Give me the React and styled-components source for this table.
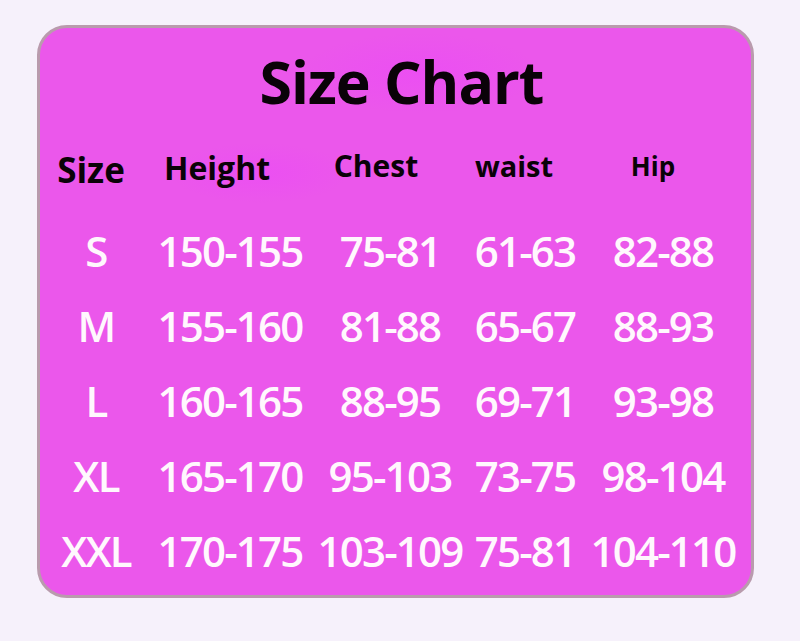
import React from 'react'
import styled, { createGlobalStyle } from 'styled-components'

const GlobalStyle = createGlobalStyle`
  html, body {
    margin: 0;
    padding: 0;
    background: #f6f1fb;
  }
  body {
    font-family: "Open Sans", "Noto Sans", sans-serif;
  }
`

const Page = styled.div`
  width: 800px;
  height: 641px;
  padding: 25px 0 0 37px;
  box-sizing: border-box;
`

const Card = styled.section`
  width: 717px;
  height: 573px;
  box-sizing: border-box;
  border: 3px solid #b99bad;
  border-radius: 30px;
  background:
    radial-gradient(ellipse 120px 40px at 380px 45px, rgba(236, 70, 250, 0.5), transparent),
    radial-gradient(ellipse 90px 30px at 220px 145px, rgba(236, 70, 250, 0.45), transparent),
    #eb57eb;
  overflow: hidden;
`

const Title = styled.h1`
  margin: 16px 0 0;
  padding-left: 12px;
  height: 75px;
  line-height: 75px;
  text-align: center;
  font-size: 59px;
  font-weight: 700;
  color: #0a0208;
  letter-spacing: -1px;
`

const Row = styled.div`
  display: grid;
  grid-template-columns: 112px 156px 164px 106px 170px;
  align-items: center;
  height: ${p => p.$h}px;
  margin-top: ${p => p.$mt || 0}px;
`

const Body = styled.div`
  margin-top: 25px;
`

const Head = styled.div`
  text-align: center;
  white-space: nowrap;
  font-weight: 700;
  color: #0a0208;
  font-size: ${p => p.$size}px;
  line-height: 40px;
  transform: translate(${p => p.$dx || 0}px, ${p => p.$dy || 0}px);
`

const Cell = styled.div`
  text-align: center;
  white-space: nowrap;
  color: #fff8fd;
  font-size: 42px;
  font-weight: 600;
  line-height: 75px;
  letter-spacing: -1.8px;
`

const heads = [
  { t: 'Size', size: 35, dx: -5, dy: 2 },
  { t: 'Height', size: 32, dx: -13 },
  { t: 'Chest', size: 30, dx: -14, dy: -2 },
  { t: 'waist', size: 29, dx: -11, dy: -2 },
  { t: 'Hip', size: 26, dx: -10, dy: -2 },
]

const rows = [
  ['S', '150-155', '75-81', '61-63', '82-88'],
  ['M', '155-160', '81-88', '65-67', '88-93'],
  ['L', '160-165', '88-95', '69-71', '93-98'],
  ['XL', '165-170', '95-103', '73-75', '98-104'],
  ['XXL', '170-175', '103-109', '75-81', '104-110'],
]

export default function App() {
  return (
    <Page>
      <GlobalStyle />
      <Card>
        <Title>Size Chart</Title>
        <Row $h={40} $mt={29}>
          {heads.map(h => (
            <Head key={h.t} $size={h.size} $dx={h.dx} $dy={h.dy}>{h.t}</Head>
          ))}
        </Row>
        <Body>
          {rows.map(r => (
            <Row key={r[0]} $h={75}>
              {r.map((c, i) => <Cell key={i}>{c}</Cell>)}
            </Row>
          ))}
        </Body>
      </Card>
    </Page>
  )
}
